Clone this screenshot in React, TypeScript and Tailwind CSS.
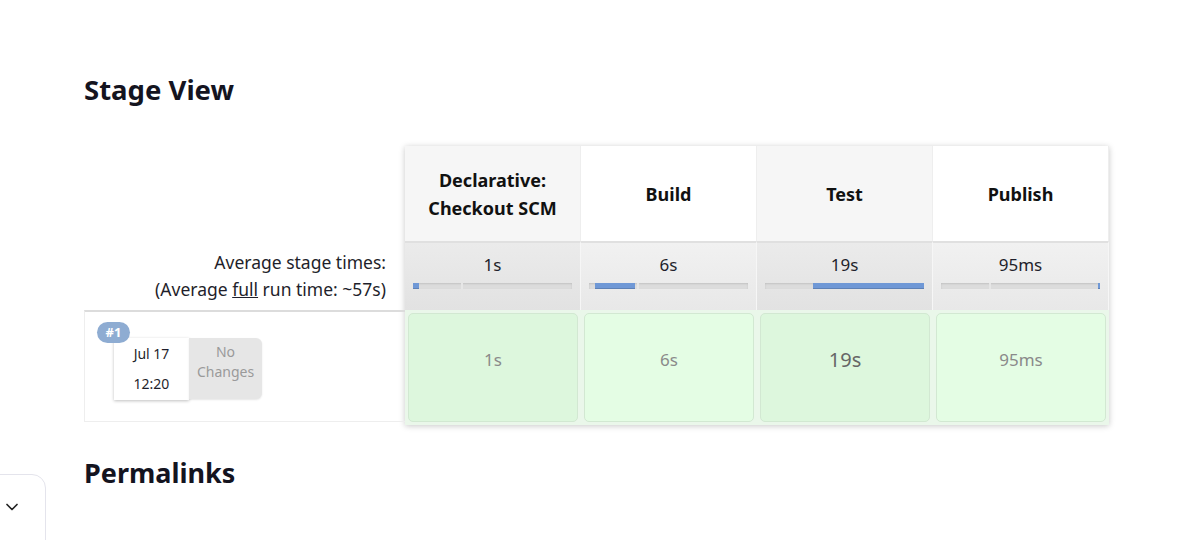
import { ChevronDown } from 'lucide-react';

interface Stage {
  name: string[];
  avg: string;
  time: string;
  barLeft: number;
  barWidth: number;
  dark: boolean;
  big?: boolean;
}

const stages: Stage[] = [
  { name: ['Declarative:', 'Checkout SCM'], avg: '1s', time: '1s', barLeft: 0, barWidth: 4, dark: true },
  { name: ['Build'], avg: '6s', time: '6s', barLeft: 4, barWidth: 25, dark: false },
  { name: ['Test'], avg: '19s', time: '19s', barLeft: 30, barWidth: 70, dark: true, big: true },
  { name: ['Publish'], avg: '95ms', time: '95ms', barLeft: 99, barWidth: 1, dark: false },
];

const font = { fontFamily: '"Noto Sans", "Open Sans", sans-serif' };

const App = () => {
  return (
    <div className="relative h-[540px] w-[1196px] overflow-hidden bg-white text-[#1f1f2b]" style={font}>
      <div className="pl-[84px] pt-[72px]">
        <h2 className="text-[27.5px] font-bold leading-[36px] text-[#14141f]">Stage View</h2>

        <div className="mt-[38px] flex">
          {/* left column */}
          <div className="w-[321px]">
            <div className="h-[95px]" />
            <div className="flex h-[69px] flex-col items-end justify-center pr-[19px] text-[17.5px] leading-[27px]">
              <span>Average stage times:</span>
              <span>
                (Average <span className="underline">full</span> run time: ~57s)
              </span>
            </div>
            <div className="relative h-[112px] border-t-2 border-b border-l border-t-[#dcdcdc] border-b-[#eeeeee] border-l-[#eeeeee]">
              <div className="absolute left-[12px] top-[10px] z-10 flex h-[21px] w-[33px] items-center justify-center rounded-full bg-[#8eacd2] text-[13px] font-bold text-white">
                #1
              </div>
              <div className="ml-[29px] mt-[26px] flex">
                <div className="flex h-[62px] w-[75px] flex-col items-center justify-center bg-white text-[14px] leading-[30px] shadow-[0_1px_3px_rgba(0,0,0,0.25)]">
                  <span>Jul 17</span>
                  <span>12:20</span>
                </div>
                <div className="flex h-[61px] w-[73px] flex-col items-center rounded-r-[6px] bg-[#e6e6e6] pt-[4px] text-[14px] leading-[20px] text-[#9a9a9a] shadow-[0_1px_2px_rgba(0,0,0,0.1)]">
                  <span>No</span>
                  <span>Changes</span>
                </div>
              </div>
            </div>
          </div>

          {/* stage columns */}
          <div className="grid w-[704px] grid-cols-4 shadow-[0_1px_6px_rgba(0,0,0,0.22)]">
            {stages.map((s, i) => (
              <div
                key={'h' + i}
                className={`flex h-[95px] flex-col items-center justify-center border-r border-[#eeeeee] text-[18px] font-bold leading-[28px] text-[#111] ${s.dark ? 'bg-[#f6f6f6]' : 'bg-white'}`}
              >
                {s.name.map((n) => (
                  <span key={n}>{n}</span>
                ))}
              </div>
            ))}
            {stages.map((s, i) => (
              <div
                key={'a' + i}
                className={`flex h-[69px] flex-col border-t-2 border-r border-t-[#e0e0e0] border-r-[#f6f6f6] px-[8px] pt-[10px] ${s.dark ? 'bg-gradient-to-b from-[#ebebeb] to-[#e2e2e2]' : 'bg-gradient-to-b from-[#f1f1f1] to-[#e8e8e8]'}`}
              >
                <span className="text-center text-[17px] leading-[24px]">{s.avg}</span>
                <div className="relative mt-[6px] h-[6px] bg-[#dcdcdc] shadow-[inset_0_1px_2px_rgba(0,0,0,0.12)]">
                  <div className="absolute top-0 h-[6px] w-[2px] bg-[#e6e6e6]" style={{ left: '30%' }} />
                  <div
                    className="absolute top-0 h-[6px] bg-[#6f98d6] shadow-[inset_0_-1px_0_rgba(0,0,0,0.15)]"
                    style={{ left: s.barLeft + '%', width: s.barWidth + '%' }}
                  />
                </div>
              </div>
            ))}
            {stages.map((s, i) => (
              <div key={'c' + i} className="h-[115px] bg-[#eaf7ea] p-[3px]">
                <div
                  className={`flex h-full items-center justify-center rounded-[5px] border border-[#d2e8d2] pb-[16px] ${s.dark ? 'bg-[#ddf7dd]' : 'bg-[#e4fde4]'} ${s.big ? 'text-[20px] text-[#666]' : 'text-[17px] text-[#8a8a8a]'}`}
                >
                  {s.time}
                </div>
              </div>
            ))}
          </div>
        </div>

        <h2 className="mt-[30px] text-[27px] font-bold leading-[36px] text-[#14141f]">Permalinks</h2>
      </div>

      <div className="absolute left-[-10px] top-[474px] flex h-[90px] w-[56px] justify-end rounded-tr-[14px] border border-[#e4e4ec] bg-white pr-[23px] pt-[22px]">
        <ChevronDown size={20} strokeWidth={2} className="text-[#222]" />
      </div>
    </div>
  );
};

export default App;
